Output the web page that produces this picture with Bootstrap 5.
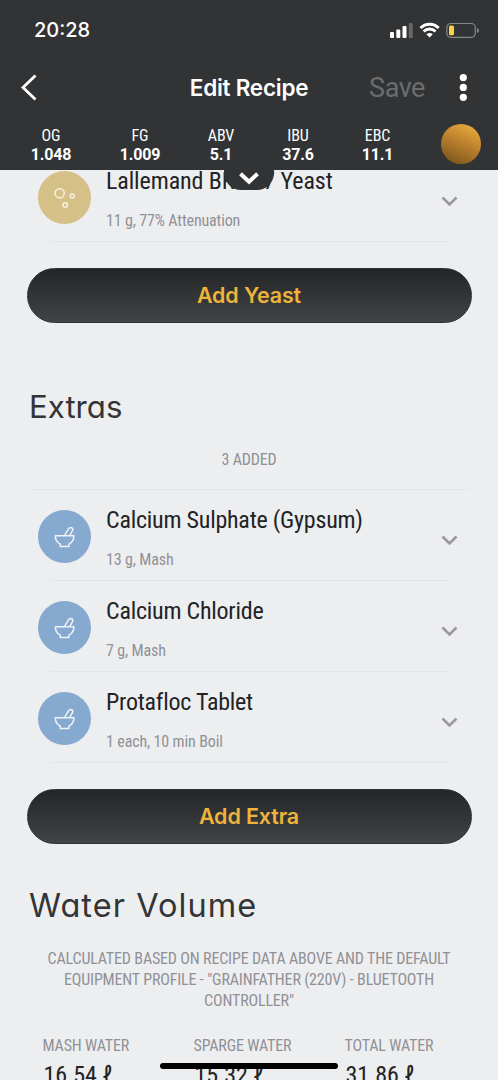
<!DOCTYPE html>
<html lang="en">
<head>
<meta charset="utf-8">
<meta name="viewport" content="width=device-width, initial-scale=1">
<title>Edit Recipe</title>
<link href="https://cdn.jsdelivr.net/npm/bootstrap@5.3.0/dist/css/bootstrap.min.css" rel="stylesheet">
<style>
html,body{height:100%;overflow:hidden}
body{background:#edeef0;color:#222325;font-family:"Roboto Condensed",Roboto,sans-serif;font-stretch:75%}
.phone{height:1080px;overflow:hidden}
.ui{font-family:Inter,sans-serif;font-stretch:normal}
.topbar{height:170px;background:#323335;color:#fff;z-index:3}
.statusbar{height:60px;padding:0 19px 0 34px}
.clock{font-size:20px;font-weight:500;line-height:62px}
.titlebar{height:56px}
.page-title{font-size:22.5px;font-weight:600;line-height:56px;letter-spacing:-.25px;white-space:nowrap}
.back{margin-left:20px}
.save{font-family:Roboto,sans-serif;font-stretch:normal;font-size:27px;letter-spacing:-.45px;line-height:58px;color:#6b6c6e;margin-right:34px}
.more{margin-right:31px}
.stats{height:54px;padding-top:10px}
.stat{font-size:16px;line-height:19px;text-align:center;letter-spacing:-.15px}
.stat b{display:block;font-family:Roboto,sans-serif;font-stretch:normal;font-weight:700;font-size:16px}
.beer{width:40px;height:40px;margin:-2px 17px 0 auto;background:linear-gradient(205deg,#e9a83c 10%,#b0792a 55%,#775319 95%)}
.pull{width:50px;height:21px;left:224px;top:169px;background:#323335;border-radius:0 0 17px 17px}
.ingredient{height:91px;padding:0 40px 0 38px}
.ingredient::after{content:"";position:absolute;left:50px;right:50px;bottom:0;height:1px;background:#e4e5e7}
.disc{width:53px;height:53px;margin-top:19.5px;background:#86a9cf}
.disc.yeast{background:#d5c187}
.texts{margin-left:15px}
.name{font-size:24px;line-height:28px;margin-top:16px;letter-spacing:-.23px}
.detail{font-size:16px;line-height:20px;margin-top:16px;letter-spacing:-.14px;color:#909196}
.chev{margin-top:45px}
.cta{width:445px;height:55px;margin:26px 0 0 26.5px;border:1px solid #303133;border-radius:28px;background:linear-gradient(#242527,#424345);color:#ecb43b;font-size:21.5px;font-weight:600;letter-spacing:-.15px}
.section-title{font-family:Inter,sans-serif;font-stretch:normal;font-feature-settings:"cv11";font-weight:400;font-size:31.200px;line-height:40px;margin:0 0 0 29px;color:#333436}
.section-title.wide{font-size:32.500px;letter-spacing:1.05px}
.caps{font-size:16px;line-height:21px;letter-spacing:-.16px;color:#909196;text-align:center}
.volume{font-size:24px;line-height:28px;margin:5px 0 0 1px;letter-spacing:-.1px}
.home{width:178px;height:6px;left:160px;top:1063px;background:#000;z-index:4}
</style>
</head>
<body>
<div class="phone position-relative">
<header class="topbar position-relative">
  <div class="statusbar d-flex justify-content-between align-items-center ui">
    <span class="clock">20:28</span>
    <svg width="90" height="16" viewBox="0 0 90 16"><g fill="#fff"><rect x="1" y="10" width="4" height="6" rx="1"/><rect x="7.3" y="7.5" width="4" height="8.5" rx="1"/><rect x="13.5" y="4" width="4" height="12" rx="1"/></g><rect x="19.8" y="1" width="4" height="15" rx="1" fill="#656668"/><g fill="none" stroke="#fff" stroke-width="2.9"><path d="M31.5 6.1a12.6 12.6 0 0 1 18.2 0M34.7 9.5a8.2 8.2 0 0 1 11.8 0"/></g><path d="M37.4 12.2q3.2-2.4 6.4 0l-3.2 3.4z" fill="#fff"/><rect x="57.8" y="1.5" width="28.5" height="13.8" rx="4" fill="none" stroke="#87888a" stroke-width="1.2"/><rect x="60" y="3.6" width="5" height="9.6" rx="1.5" fill="#f8d348"/><path d="M88 6q2 .8 2 2.5T88 11z" fill="#87888a"/></svg>
  </div>
  <div class="titlebar d-flex align-items-center position-relative">
    <svg class="back" width="18" height="28" viewBox="0 0 18 28"><path d="M15.5 1.500 3 13.500l12.500 12" fill="none" stroke="#fff" stroke-width="2.8"/></svg>
    <span class="page-title ui position-absolute start-50 translate-middle-x">Edit Recipe</span>
    <span class="save ms-auto">Save</span>
    <svg class="more" width="8" height="28" viewBox="0 0 8 28" fill="#fff"><circle cx="4.300" cy="3.600" r="3.600"/><circle cx="4.300" cy="13.400" r="3.600"/><circle cx="4.300" cy="23.300" r="3.600"/></svg>
  </div>
  <div class="stats d-flex">
    <div class="stat" style="width:102px">OG<b>1.048</b></div>
    <div class="stat" style="width:76px">FG<b>1.009</b></div>
    <div class="stat" style="width:86px">ABV<b>5.1</b></div>
    <div class="stat" style="width:68px">IBU<b>37.6</b></div>
    <div class="stat" style="width:91px">EBC<b>11.1</b></div>
    <div class="beer rounded-circle"></div>
  </div>
  <div class="pull position-absolute text-center"><svg class="d-block mx-auto" width="22" height="18" viewBox="0 0 22 18"><path d="m2.500 4.800 8.500 8 8.500-8" fill="none" stroke="#fff" stroke-width="4"/></svg></div>
</header>
<main>
  <section style="margin-top:-19px">
    <div class="ingredient position-relative d-flex">
      <div class="disc yeast rounded-circle flex-shrink-0"><svg class="d-block" width="53" height="53" fill="none" stroke="#f6f1e2" stroke-width="1.500"><circle cx="21.700" cy="22.300" r="4.600"/><circle cx="34.200" cy="25" r="2"/><circle cx="27.200" cy="34" r="2.300"/></svg></div>
      <div class="texts"><div class="name" style="letter-spacing:-.1px">Lallemand BRY-97 Yeast</div><div class="detail">11 g, 77% Attenuation</div></div>
      <svg class="chev ms-auto" width="17" height="11" viewBox="0 0 17 11"><path d="m1.500 1.500 7 7 7-7" fill="none" stroke="#99999b" stroke-width="2.600"/></svg>
    </div>
    <button class="cta btn d-flex align-items-center justify-content-center ui">Add Yeast</button>
  </section>
  <section style="margin-top:64px">
    <h2 class="section-title">Extras</h2>
    <div class="caps" style="margin-top:22px">3 ADDED</div>
    <div style="margin:19px 29px 0;height:1px;background:#e4e5e7"></div>
    <div class="ingredient position-relative d-flex">
      <div class="disc rounded-circle flex-shrink-0"><svg class="d-block" width="53" height="53" fill="none" stroke="#eef3f8" stroke-width="1.500" stroke-linejoin="round"><path id="bowl" d="M17.300 25.700h18.600c0 4-1.800 6.800-5 8.500v2.400h-8.600v-2.400c-3.200-1.700-5-4.500-5-8.500zM26.500 25.700l4.100-7c1.700-2.500 5.100-.7 3.900 2l-2.800 5"/></svg></div>
      <div class="texts"><div class="name">Calcium Sulphate (Gypsum)</div><div class="detail">13 g, Mash</div></div>
      <svg class="chev ms-auto" width="17" height="11" viewBox="0 0 17 11"><path d="m1.500 1.500 7 7 7-7" fill="none" stroke="#99999b" stroke-width="2.600"/></svg>
    </div>
    <div class="ingredient position-relative d-flex">
      <div class="disc rounded-circle flex-shrink-0"><svg class="d-block" width="53" height="53" fill="none" stroke="#eef3f8" stroke-width="1.500" stroke-linejoin="round"><use href="#bowl"/></svg></div>
      <div class="texts"><div class="name">Calcium Chloride</div><div class="detail">7 g, Mash</div></div>
      <svg class="chev ms-auto" width="17" height="11" viewBox="0 0 17 11"><path d="m1.500 1.500 7 7 7-7" fill="none" stroke="#99999b" stroke-width="2.600"/></svg>
    </div>
    <div class="ingredient position-relative d-flex">
      <div class="disc rounded-circle flex-shrink-0"><svg class="d-block" width="53" height="53" fill="none" stroke="#eef3f8" stroke-width="1.500" stroke-linejoin="round"><use href="#bowl"/></svg></div>
      <div class="texts"><div class="name">Protafloc Tablet</div><div class="detail">1 each, 10 min Boil</div></div>
      <svg class="chev ms-auto" width="17" height="11" viewBox="0 0 17 11"><path d="m1.500 1.500 7 7 7-7" fill="none" stroke="#99999b" stroke-width="2.600"/></svg>
    </div>
    <button class="cta btn d-flex align-items-center justify-content-center ui">Add Extra</button>
  </section>
  <section style="margin-top:42px">
    <h2 class="section-title wide">Water Volume</h2>
    <div class="caps" style="margin-top:22px">CALCULATED BASED ON RECIPE DATA ABOVE AND THE DEFAULT<br>EQUIPMENT PROFILE - "GRAINFATHER (220V) - BLUETOOTH<br>CONTROLLER"</div>
    <div class="d-flex" style="margin-top:24px">
      <div style="width:151px;margin-left:42.500px"><div class="caps text-start">MASH WATER</div><div class="volume">16.54 ℓ</div></div>
      <div style="width:151px"><div class="caps text-start">SPARGE WATER</div><div class="volume">15.32 ℓ</div></div>
      <div><div class="caps text-start">TOTAL WATER</div><div class="volume">31.86 ℓ</div></div>
    </div>
  </section>
</main>
<div class="home position-absolute rounded-pill"></div>
</div>
<script src="https://cdn.jsdelivr.net/npm/bootstrap@5.3.0/dist/js/bootstrap.bundle.min.js"></script>
</body>
</html>
